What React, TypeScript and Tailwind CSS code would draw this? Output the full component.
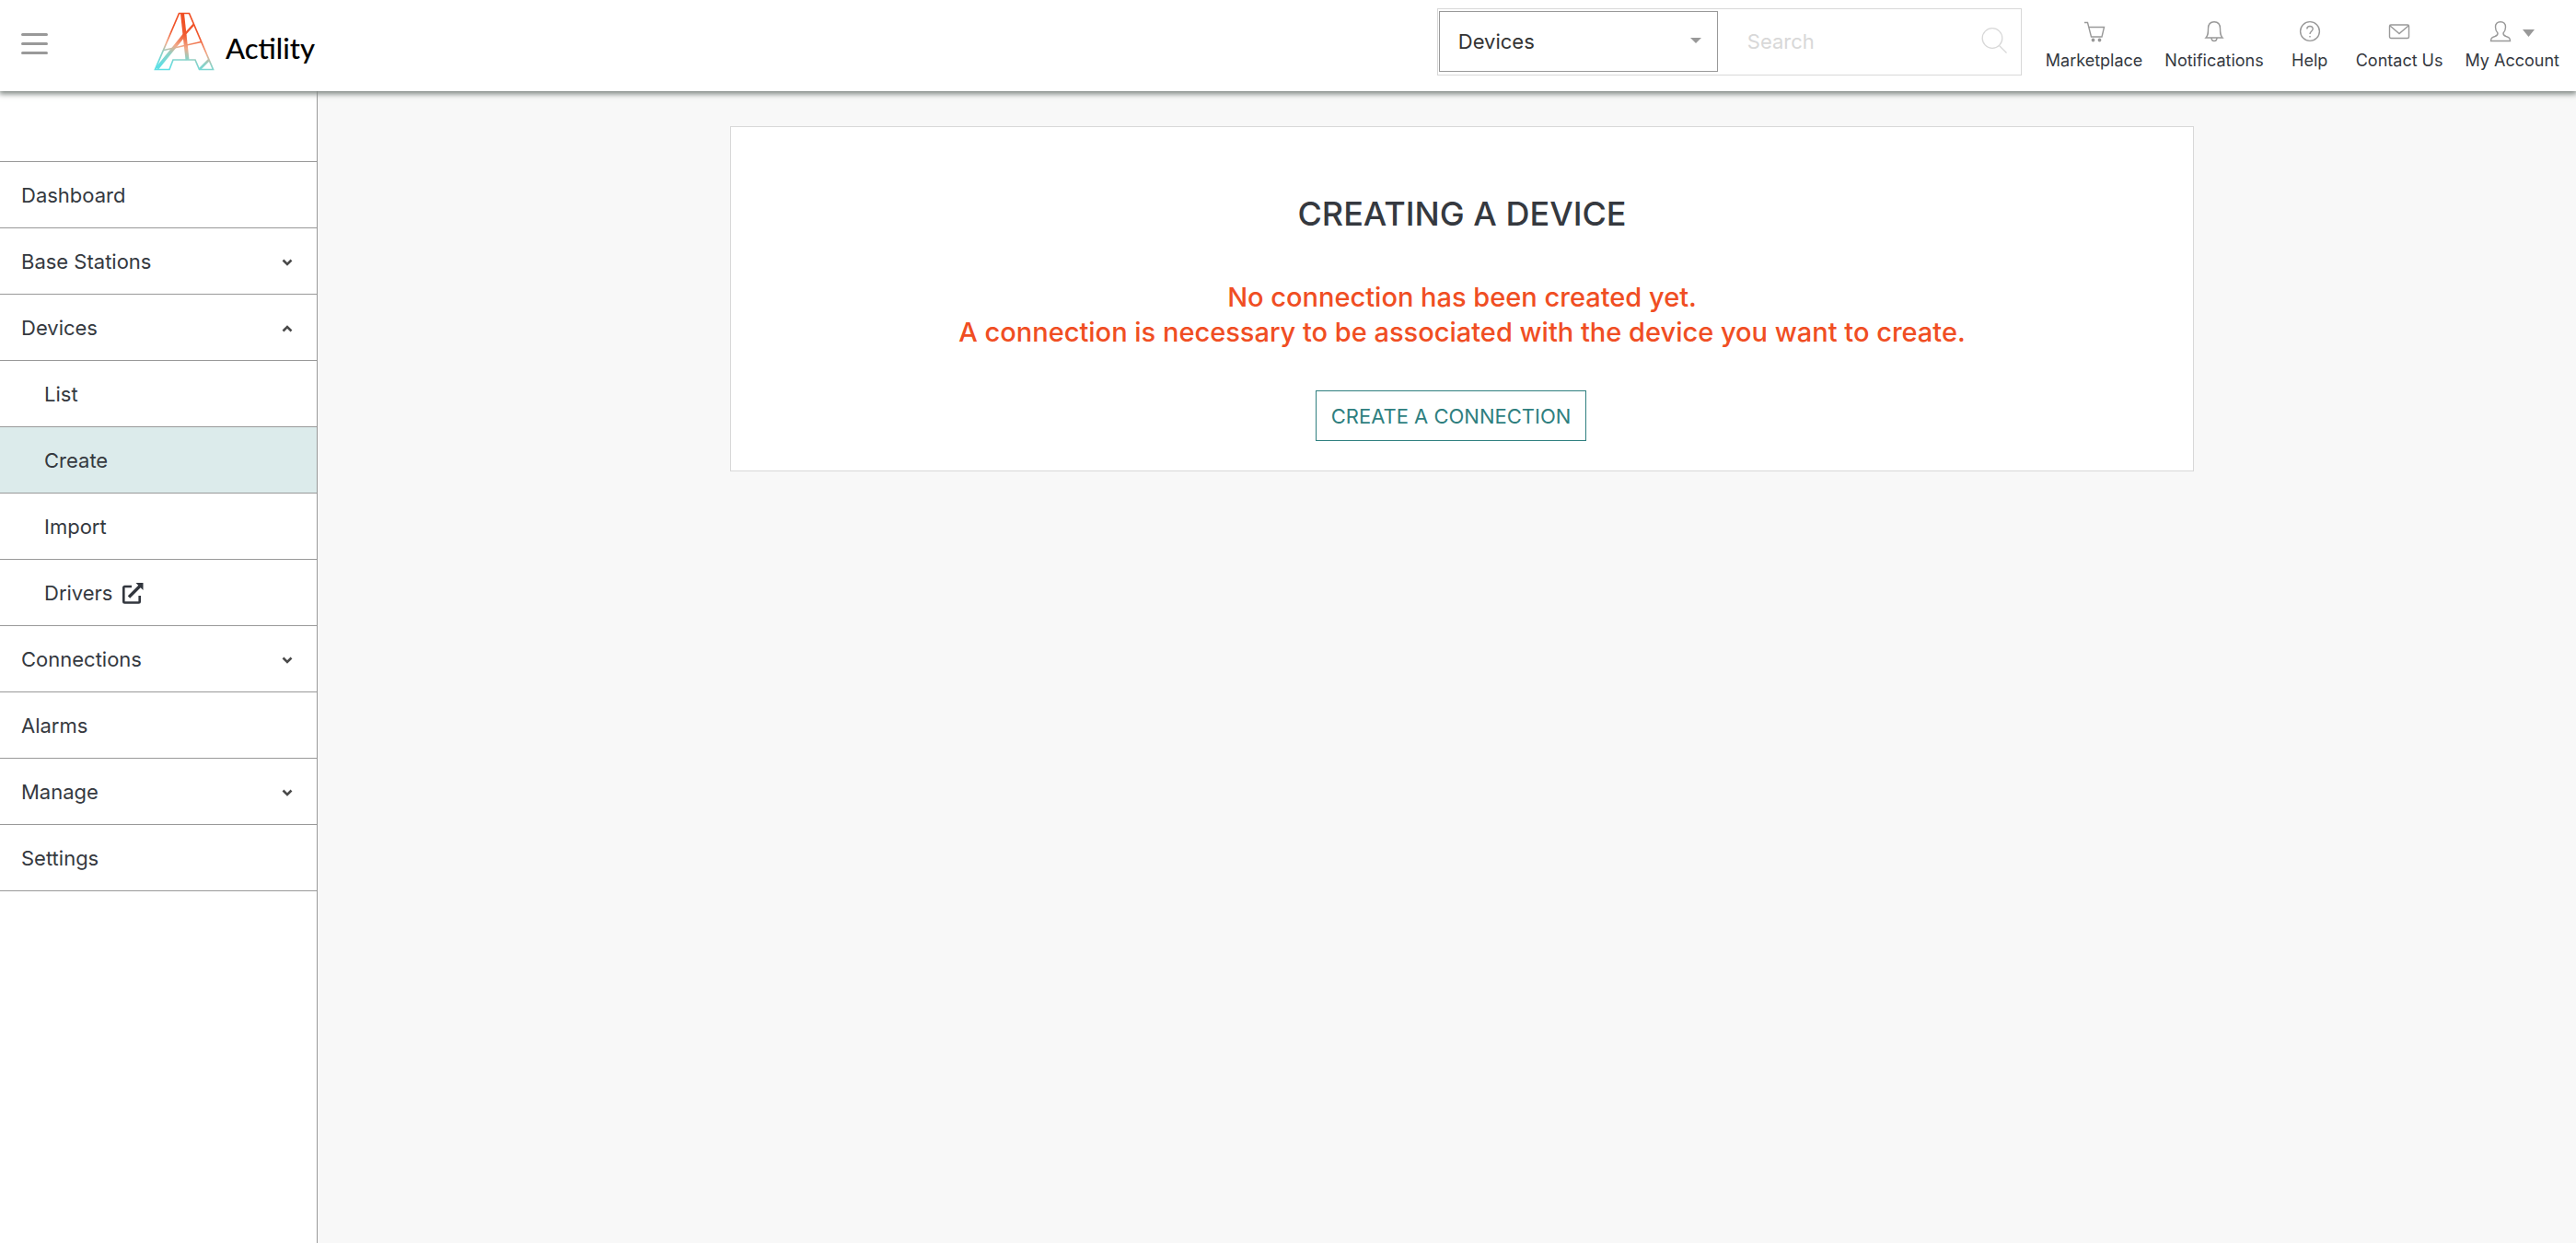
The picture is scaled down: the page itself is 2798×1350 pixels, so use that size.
import React from "react";

function Logo() {
  return (
    <svg viewBox="0 0 66 64" className="h-16 w-[66px]" fill="none" aria-hidden="true">
      <defs>
        <linearGradient id="mark" x1="38" y1="4" x2="22" y2="62" gradientUnits="userSpaceOnUse">
          <stop offset="0" stopColor="#f04e23" />
          <stop offset="0.35" stopColor="#f0592f" />
          <stop offset="0.58" stopColor="#f2a989" />
          <stop offset="0.75" stopColor="#8fd0c4" />
          <stop offset="1" stopColor="#5fdfe4" />
        </linearGradient>
      </defs>
      <g stroke="url(#mark)">
        <path strokeWidth="1.700" d="M27.500 1.500H38.500L64.500 62.500H49.500L45 52H21L17 62.500H1.500Z" />
        <path strokeWidth="4" d="M31 1.500L36.500 52" />
        <path strokeWidth="2.400" d="M43.500 13.500L34 24" />
        <path strokeWidth="3.600" d="M34 24L3.500 61.500" />
        <path strokeWidth="1.400" d="M11 41.500L51.500 32.500" />
        <path strokeWidth="2.600" d="M60 52L50 62" />
      </g>
    </svg>
  );
}

function Chevron({ up = false }: { up?: boolean }) {
  return (
    <svg viewBox="0 0 12 8" className="h-2 w-3" fill="none" stroke="#4a4a4a" strokeWidth="2.600" aria-hidden="true">
      <path d={up ? "M1.500 6.500L6 2L10.500 6.500" : "M1.500 1.500L6 6L10.500 1.500"} />
    </svg>
  );
}

function ExternalIcon() {
  return (
    <svg viewBox="0 0 23 23" className="size-[23px]" fill="none" stroke="#32363e" strokeWidth="2.600" aria-hidden="true">
      <path d="M10 4H2.500A1.200 1.200 0 0 0 1.300 5.200V20.300A1.200 1.200 0 0 0 2.500 21.500H17.500A1.200 1.200 0 0 0 18.700 20.300V14" />
      <path d="M7 15.500L19 3.500" strokeWidth="3.400" />
      <path d="M14.500 0H22.500V8Z" fill="#32363e" stroke="none" />
    </svg>
  );
}

function Glyph({ children }: { children: React.ReactNode }) {
  return (
    <svg viewBox="0 0 24 24" className="size-6" fill="none" stroke="#999" strokeWidth="1.400" aria-hidden="true">
      {children}
    </svg>
  );
}

const tools = [
  {
    label: "Marketplace",
    icon: (
      <Glyph>
        <path d="M1 2.500H4.500L8.500 18H20L22.500 7.500H6" />
        <circle cx="10.500" cy="21.500" r="1.200" fill="#999" />
        <circle cx="17.500" cy="21.500" r="1.200" fill="#999" />
      </Glyph>
    ),
  },
  {
    label: "Notifications",
    icon: (
      <Glyph>
        <path d="M3 19C5.500 16.500 5.500 14 5.500 9C5.500 4.500 8 1.700 12 1.700S18.500 4.500 18.500 9C18.500 14 18.500 16.500 21 19ZM9 19C9 21.300 10.200 22.500 12 22.500S15 21.300 15 19" />
      </Glyph>
    ),
  },
  {
    label: "Help",
    icon: (
      <Glyph>
        <circle cx="12" cy="12" r="10.400" />
        <path d="M8.800 9.500C8.800 5.500 15.200 5.500 15.200 9.300C15.200 12 12 12 12 15M12 17V18.500" />
      </Glyph>
    ),
  },
  {
    label: "Contact Us",
    icon: (
      <Glyph>
        <rect x="1.500" y="5" width="21" height="14.500" rx="1.500" />
        <path d="M2 6L12 14.500L22 6" />
      </Glyph>
    ),
  },
  {
    label: "My Account",
    caret: true,
    icon: (
      <Glyph>
        <path d="M12 1.700C8.500 1.700 6.500 4 6.500 7.500C6.500 10.500 7.500 12.500 9 14C9.200 16 8.500 16.500 6 17.500C2.500 18.700 1.700 19.500 1.500 22.500H22.500C22.300 19.500 21.500 18.700 18 17.500C15.500 16.500 14.800 16 15 14C16.500 12.500 17.500 10.500 17.500 7.500C17.500 4 15.500 1.700 12 1.700Z" />
      </Glyph>
    ),
  },
];

type Item = { label: string; sub?: boolean; active?: boolean; chevron?: "up" | "down"; external?: boolean };

const items: Item[] = [
  { label: "Dashboard" },
  { label: "Base Stations", chevron: "down" },
  { label: "Devices", chevron: "up" },
  { label: "List", sub: true },
  { label: "Create", sub: true, active: true },
  { label: "Import", sub: true },
  { label: "Drivers", sub: true, external: true },
  { label: "Connections", chevron: "down" },
  { label: "Alarms" },
  { label: "Manage", chevron: "down" },
  { label: "Settings" },
];

function NavItem({ item }: { item: Item }) {
  const row = `flex h-[71px] w-full items-center pt-0.5 pr-[26px] text-[22px] ${item.sub ? "pl-12" : "pl-[23px]"} ${
    item.active ? "bg-[#dcebeb]" : "bg-white"
  }`;
  return (
    <li className="border-b border-[#999]">
      {item.chevron ? (
        <button type="button" aria-expanded={item.chevron === "up"} className={`${row} justify-between`}>
          {item.label}
          <Chevron up={item.chevron === "up"} />
        </button>
      ) : (
        <a href="#" className={`${row} gap-2.5`} aria-current={item.active ? "page" : undefined}>
          {item.label}
          {item.external && <ExternalIcon />}
        </a>
      )}
    </li>
  );
}

export default function App() {
  return (
    <div className="flex min-h-screen flex-col bg-[#f8f8f8] font-[Inter,sans-serif] text-[#35393f]">
      <header className="relative z-10 flex h-[99px] items-center justify-between bg-white pr-[18px] pl-[23px] shadow-[0_2px_6px_1px_#7b837f]">
        <div className="flex items-center pb-1">
          <button type="button" aria-label="Toggle menu" className="flex flex-col gap-[7px]">
            <span className="h-[3px] w-[29px] rounded-full bg-[#999]" />
            <span className="h-[3px] w-[29px] rounded-full bg-[#999]" />
            <span className="h-[3px] w-[29px] rounded-full bg-[#999]" />
          </button>
          <a href="#" className="ml-[115px] flex items-center gap-3 pb-1.5">
            <Logo />
            <span className="pt-3.5 font-[Lato,sans-serif] text-[31px] leading-10 font-medium text-black">Actility</span>
          </a>
        </div>

        <div className="flex items-center gap-[26px]">
          <form className="mb-2 flex h-[73px] w-[635px] items-start border border-[#d8d8d8] p-px pt-[2px]">
            <div className="relative">
              <select
                aria-label="Search category"
                className="h-[66px] w-[303px] appearance-none border border-[#999] bg-white pl-5 text-[22px] text-[#333]"
              >
                <option>Devices</option>
              </select>
              <svg viewBox="0 0 12 6" className="pointer-events-none absolute top-[29px] right-[18px] h-1.5 w-3" fill="#999" aria-hidden="true">
                <path d="M0 0H12L6 6Z" />
              </svg>
            </div>
            <input
              type="text"
              aria-label="Search"
              placeholder="Search"
              className="h-[66px] min-w-0 flex-1 pl-8 text-[22px] outline-none placeholder:text-[#d8d8d8]"
            />
            <button type="submit" aria-label="Run search" className="mt-[18px] mr-3.5">
              <svg viewBox="0 0 28 28" className="size-7" fill="none" stroke="#d8d8d8" strokeWidth="1.300" aria-hidden="true">
                <circle cx="12" cy="11.500" r="10.800" />
                <path d="M19.500 19.500L27.500 27.500" />
              </svg>
            </button>
          </form>
          <nav aria-label="Tools" className="flex gap-6">
            {tools.map((t) => (
              <button key={t.label} type="button" className="flex min-w-[52px] flex-col items-center gap-2 text-[18px] leading-6">
                <span className="flex items-center gap-3">
                  {t.icon}
                  {t.caret && (
                    <svg viewBox="0 0 13 8" className="mt-1 h-2 w-[13px]" fill="#999" aria-hidden="true">
                      <path d="M0 0H13L6.500 8Z" />
                    </svg>
                  )}
                </span>
                {t.label}
              </button>
            ))}
          </nav>
        </div>
      </header>

      <div className="flex flex-1">
        <aside className="w-[345px] shrink-0 border-r border-[#999] bg-white pt-[76px]">
          <nav aria-label="Main">
            <ul className="border-t border-[#999]">
              {items.map((item) => (
                <NavItem key={item.label} item={item} />
              ))}
            </ul>
          </nav>
        </aside>

        <main className="flex flex-1 items-start justify-center pt-[38px] pl-[33px]">
          <section className="flex w-full max-w-[1590px] flex-col items-center border border-[#d8d8d8] bg-white pt-[70px] pb-8 text-center">
            <h1 className="text-[36px] leading-12 font-medium">CREATING A DEVICE</h1>
            <p className="mt-12 text-[29px] leading-[38px] font-medium text-[#f04e23]">
              No connection has been created yet.
              <br />
              A connection is necessary to be associated with the device you want to create.
            </p>
            <button type="button" className="mt-11 mr-6 h-[55px] border border-[#2f7f7f] px-4 pt-0.5 text-[22px] text-[#2f7f7f]">
              CREATE A CONNECTION
            </button>
          </section>
        </main>
      </div>
    </div>
  );
}
